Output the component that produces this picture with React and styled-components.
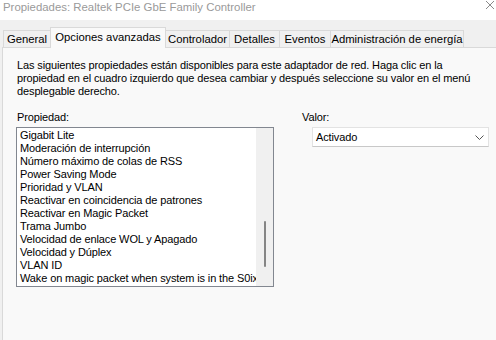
import React from "react";
import styled, { createGlobalStyle } from "styled-components";

const Global = createGlobalStyle`
  html, body { margin: 0; padding: 0; background: #f0f0f0; }
  body { width: 496px; height: 340px; overflow: hidden; }
`;

const Window = styled.div`
  width: 496px;
  height: 340px;
  display: flex;
  flex-direction: column;
  background: #f0f0f0;
  overflow: hidden;
`;

const TitleBar = styled.div`
  height: 20px;
  flex: none;
  background: #ffffff;
  display: flex;
  align-items: center;
  justify-content: space-between;
  padding: 0 1px 0 3px;
  font-family: "Liberation Sans", Arial, sans-serif;
  font-size: 11.4px;
  color: #9a9a9a;
`;

const TitleText = styled.span`
  margin-top: -6px;
  white-space: nowrap;
`;

const CloseIcon = styled.svg`
  width: 10px;
  height: 10px;
  margin-top: -10px;
`;

const TabStrip = styled.div`
  height: 27px;
  flex: none;
  display: flex;
  align-items: flex-end;
  padding-left: 3px;
`;

const Tab = styled.div`
  box-sizing: border-box;
  width: ${(p) => p.$w}px;
  height: ${(p) => (p.$active ? 21 : 17)}px;
  margin-bottom: ${(p) => (p.$active ? -1 : 0)}px;
  position: relative;
  z-index: ${(p) => (p.$active ? 2 : 1)};
  background: ${(p) => (p.$active ? "#f9f9f9" : "#f0f0f0")};
  border: 1px solid #d9d9d9;
  border-bottom: none;
  margin-right: -1px;
  display: flex;
  align-items: center;
  justify-content: center;
  padding-bottom: ${(p) => (p.$active ? 2 : 0)}px;
  font-family: "Liberation Sans", Arial, sans-serif;
  font-size: 11.3px;
  color: #000;
  white-space: nowrap;
`;

const Panel = styled.div`
  flex: 1;
  margin-left: 2px;
  background: #f9f9f9;
  border-top: 1px solid #d9d9d9;
  border-left: 1px solid #d9d9d9;
  padding: 11px 0 0 14px;
  font-family: "Liberation Sans", Arial, sans-serif;
  font-size: 11px;
  line-height: 13px;
  letter-spacing: -0.12px;
  color: #000;
`;

const Description = styled.p`
  margin: 0;
  white-space: nowrap;
`;

const Columns = styled.div`
  display: flex;
  margin-top: 13px;
  gap: 28px;
`;

const Column = styled.div`
  display: flex;
  flex-direction: column;
`;

const Label = styled.div`
  height: 13px;
  margin-bottom: 3px;
`;

const ListBox = styled.div`
  box-sizing: border-box;
  width: 258px;
  height: 160px;
  margin-left: -1px;
  border: 1px solid #828790;
  background: #ffffff;
  display: flex;
`;

const Items = styled.div`
  flex: 1;
  overflow: hidden;
  padding: 1px 0 0 3px;
`;

const Item = styled.div`
  height: 13px;
  white-space: nowrap;
`;

const ScrollTrack = styled.div`
  width: 17px;
  flex: none;
  background: #f0f0f0;
  display: flex;
  flex-direction: column;
  align-items: center;
`;

const ScrollThumb = styled.div`
  width: 2px;
  background: #858585;
  border-radius: 1px;
`;

const Combo = styled.div`
  box-sizing: border-box;
  width: 177px;
  height: 20px;
  margin-left: 10px;
  background: #ffffff;
  border: 1px solid #e3e3e3;
  border-bottom-color: #c8c8c8;
  display: flex;
  align-items: center;
  justify-content: space-between;
  padding: 0 4px 0 3px;
`;

const Chevron = styled.svg`
  width: 9px;
  height: 5px;
`;

const items = [
  "Gigabit Lite",
  "Moderación de interrupción",
  "Número máximo de colas de RSS",
  "Power Saving Mode",
  "Prioridad y VLAN",
  "Reactivar en coincidencia de patrones",
  "Reactivar en Magic Packet",
  "Trama Jumbo",
  "Velocidad de enlace WOL y Apagado",
  "Velocidad y Dúplex",
  "VLAN ID",
  "Wake on magic packet when system is in the S0ix power state",
];

const tabs = [
  { label: "General", w: 48 },
  { label: "Opciones avanzadas", w: 116, active: true },
  { label: "Controlador", w: 65 },
  { label: "Detalles", w: 51 },
  { label: "Eventos", w: 52 },
  { label: "Administración de energía", w: 134 },
];

export default function App() {
  return (
    <>
      <Global />
      <Window>
        <TitleBar>
          <TitleText>Propiedades: Realtek PCIe GbE Family Controller</TitleText>
          <CloseIcon viewBox="0 0 10 10">
            <path d="M1 1 L9 9 M9 1 L1 9" stroke="#8a8a8a" strokeWidth="1" fill="none" />
          </CloseIcon>
        </TitleBar>
        <TabStrip>
          {tabs.map((t) => (
            <Tab key={t.label} $w={t.w} $active={t.active}>
              {t.label}
            </Tab>
          ))}
        </TabStrip>
        <Panel>
          <Description>
            Las siguientes propiedades están disponibles para este adaptador de red. Haga clic en la
            <br />
            propiedad en el cuadro izquierdo que desea cambiar y después seleccione su valor en el menú
            <br />
            desplegable derecho.
          </Description>
          <Columns>
            <Column>
              <Label>Propiedad:</Label>
              <ListBox>
                <Items>
                  {items.map((i) => (
                    <Item key={i}>{i}</Item>
                  ))}
                </Items>
                <ScrollTrack>
                  <ScrollThumb style={{ marginTop: 93, height: 46 }} />
                </ScrollTrack>
              </ListBox>
            </Column>
            <Column>
              <Label>Valor:</Label>
              <Combo>
                <span>Activado</span>
                <Chevron viewBox="0 0 9 5">
                  <path d="M0.5 0.5 L4.5 4.5 L8.5 0.5" stroke="#555" strokeWidth="1" fill="none" />
                </Chevron>
              </Combo>
            </Column>
          </Columns>
        </Panel>
      </Window>
    </>
  );
}
